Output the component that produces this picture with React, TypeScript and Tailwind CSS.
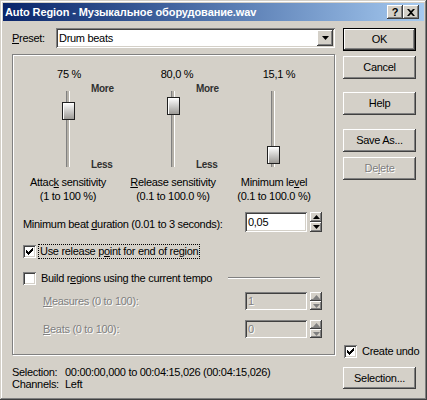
import React from "react";

const raised =
  "shadow-[inset_-1px_-1px_#404040,inset_1px_1px_#ffffff,inset_-2px_-2px_#808080,inset_2px_2px_#d4d0c8]";
const sunken =
  "shadow-[inset_1px_1px_#808080,inset_-1px_-1px_#ffffff,inset_2px_2px_#404040,inset_-2px_-2px_#d4d0c8]";
const grayText = "text-[#808080] [text-shadow:1px_1px_0_#ffffff]";

function Btn({ label, def, disabled, className = "h-[23px]" }: { label: React.ReactNode; def?: boolean; disabled?: boolean; className?: string }) {
  const inner = (
    <div className={`flex h-full w-full items-center justify-center bg-[#d4d0c8] ${raised} ${disabled ? grayText : "text-black"}`}>
      {label}
    </div>
  );
  return <div className={`w-[73px] ${def ? "border border-black" : ""} ${className}`}>{inner}</div>;
}

function Check({ checked }: { checked?: boolean }) {
  return (
    <div className={`relative h-[13px] w-[13px] shrink-0 bg-white ${sunken}`}>
      {checked && (
        <svg className="absolute left-0 top-0" width="13" height="13" viewBox="0 0 13 13">
          <path d="M3 5h1v1h1v1h1V6h1V5h1V4h1V3h1v3h-1v1h-1v1h-1v1h-1v1H5V9H4V8H3z" fill="#000" />
        </svg>
      )}
    </div>
  );
}

function Tri({ up, color }: { up?: boolean; color: string }) {
  return (
    <svg width="7" height="4" viewBox="0 0 7 4">
      <path d={up ? "M3.5 0L7 4H0z" : "M0 0h7L3.5 4z"} fill={color} />
    </svg>
  );
}

function Spin({ h, disabled }: { h: number; disabled?: boolean }) {
  const half = h / 2;
  const col = disabled ? "#808080" : "#000000";
  return (
    <div className="flex w-[12px] flex-col">
      <div style={{ height: half }} className={`flex items-center justify-center bg-[#d4d0c8] ${raised}`}>
        <Tri up color={col} />
      </div>
      <div style={{ height: half }} className={`flex items-center justify-center bg-[#d4d0c8] ${raised}`}>
        <Tri color={col} />
      </div>
    </div>
  );
}

function Slider({ thumbTop, moreLess }: { thumbTop: number; moreLess?: boolean }) {
  return (
    <div className="relative flex h-[82px] justify-center">
      <div className="mt-[3px] h-[76px] w-[4px] border-l border-r border-l-[#808080] border-r-white bg-[#b4b0a8]" />
      <div
        style={{ top: thumbTop }}
        className="absolute left-[calc(50%-6px)] h-[18px] w-[13px] border border-[#202020] bg-linear-to-b from-white to-[#9c9a96] shadow-[inset_1px_1px_#ffffff]"
      />
      {moreLess && (
        <>
          <span className="absolute left-[calc(50%+23px)] top-[-5px] text-[10px] font-bold leading-[12px] text-[#303030]">More</span>
          <span className="absolute left-[calc(50%+23px)] top-[71px] text-[10px] font-bold leading-[12px] text-[#303030]">Less</span>
        </>
      )}
    </div>
  );
}

export default function App() {
  return (
    <div
      className="flex h-[400px] w-[427px] flex-col bg-[#d4d0c8] p-[3px] text-[11px] leading-[13px] tracking-[-0.3px] text-black shadow-[inset_-1px_-1px_#404040,inset_1px_1px_#d4d0c8,inset_-2px_-2px_#808080,inset_2px_2px_#ffffff]"
      style={{ fontFamily: '"Liberation Sans", Arial, sans-serif' }}
    >
      {/* Title bar */}
      <div className="flex h-[18px] items-center justify-between bg-linear-to-r from-[#0a246a] to-[#a6caf0] pl-[2px] pr-[5px]">
        <span className="text-[11px] font-bold tracking-[-0.1px] text-white">Auto Region - Музыкальное оборудование.wav</span>
        <div className="flex">
          <div className={`flex h-[14px] w-[16px] items-center justify-center bg-[#d4d0c8] text-[11px] font-bold ${raised}`}>?</div>
          <div className={`flex h-[14px] w-[16px] items-center justify-center bg-[#d4d0c8] ${raised}`}>
            <svg width="8" height="7" viewBox="0 0 8 7">
              <path d="M0 0h2l2 2 2-2h2L5 3.5 8 7H6L4 5 2 7H0l3-3.5z" fill="#000" />
            </svg>
          </div>
        </div>
      </div>

      {/* Body */}
      <div className="flex pl-[9px] pt-[7px]">
        {/* Left column */}
        <div className="flex w-[323px] flex-col">
          <div className="flex h-[20px] items-center">
            <span className="w-[44px]">
              <u>P</u>reset:
            </span>
            <div className={`flex h-[20px] flex-1 items-center bg-white p-[2px] ${sunken}`}>
              <span className="flex-1 pl-[1px]">Drum beats</span>
              <div className={`flex h-[16px] w-[16px] items-center justify-center bg-[#d4d0c8] ${raised}`}>
                <Tri color="#000" />
              </div>
            </div>
          </div>

          <div className="mt-[6px] flex h-[301px] flex-col border border-[#808080] shadow-[inset_1px_1px_#ffffff,1px_1px_#ffffff]">
            {/* Sliders */}
            <div className="flex pl-[5px] pt-[13px]">
              <div className="flex w-[100px] flex-col items-center">
                <span className="pl-[2px]">75 %</span>
                <div className="mt-[7px] w-full">
                  <Slider thumbTop={14} moreLess />
                </div>
                <div className="mt-[5px] text-center leading-[14px]">
                  Attac<u>k</u> sensitivity
                  <br />
                  (1 to 100 %)
                </div>
              </div>
              <div className="ml-[5px] flex w-[100px] flex-col items-center">
                <span className="pl-[8px]">80,0 %</span>
                <div className="mt-[7px] w-full">
                  <Slider thumbTop={9} moreLess />
                </div>
                <div className="mt-[5px] text-center leading-[14px]">
                  <u>R</u>elease sensitivity
                  <br />
                  (0.1 to 100.0 %)
                </div>
              </div>
              <div className="flex w-[100px] flex-col items-center">
                <span className="pl-[12px]">15,1 %</span>
                <div className="mt-[7px] w-full">
                  <Slider thumbTop={58} />
                </div>
                <div className="mt-[5px] pl-[2px] text-center leading-[14px]">
                  Minimum le<u>v</u>el
                  <br />
                  (0.1 to 100.0 %)
                </div>
              </div>
            </div>

            {/* Minimum beat duration */}
            <div className="mt-[9px] flex h-[20px] items-center pl-[10px]">
              <span className="w-[222px] pt-[4px]">
                Minimum beat <u>d</u>uration (0.01 to 3 seconds):
              </span>
              <div className={`flex h-[20px] w-[62px] items-center bg-white pl-[3px] ${sunken}`}>0,05</div>
              <div className="ml-[3px]">
                <Spin h={20} />
              </div>
            </div>

            {/* Use release point */}
            <div className="mt-[11px] flex h-[16px] items-center pl-[10px]">
              <Check checked />
              <span className="ml-[2px] border border-dotted border-black px-[1px] leading-[13px]">
                Use release p<u>o</u>int for end of region
              </span>
            </div>

            {/* Build regions */}
            <div className="mt-[11px] flex h-[16px] items-center pl-[10px]">
              <Check />
              <span className="ml-[5px]">
                Build r<u>e</u>gions using the current tempo
              </span>
              <div className="ml-auto mr-[14px] w-[92px] border-t border-b border-t-[#808080] border-b-white" />
            </div>

            {/* Measures */}
            <div className="mt-[6px] flex h-[18px] items-center pl-[30px]">
              <span className={`w-[202px] ${grayText}`}>
                <u>M</u>easures (0 to 100):
              </span>
              <div className={`flex h-[18px] w-[62px] items-center bg-[#d4d0c8] pl-[3px] ${sunken} ${grayText}`}>1</div>
              <div className="ml-[3px]">
                <Spin h={18} disabled />
              </div>
            </div>

            {/* Beats */}
            <div className="mt-[10px] flex h-[18px] items-center pl-[30px]">
              <span className={`w-[202px] ${grayText}`}>
                <u>B</u>eats (0 to 100):
              </span>
              <div className={`flex h-[18px] w-[62px] items-center bg-[#d4d0c8] pl-[3px] ${sunken} ${grayText}`}>0</div>
              <div className="ml-[3px]">
                <Spin h={18} disabled />
              </div>
            </div>
          </div>

          {/* Selection info */}
          <div className="mt-[11px] grid grid-cols-[53px_1fr] leading-[12px]">
            <span>Selection:</span>
            <span>00:00:00,000 to 00:04:15,026 (00:04:15,026)</span>
            <span>Channels:</span>
            <span>Left</span>
          </div>
        </div>

        {/* Right column */}
        <div className="ml-[8px] flex w-[73px] flex-col">
          <Btn label="OK" def />
          <Btn label="Cancel" className="mt-[5px] h-[23px]" />
          <Btn label="Help" className="mt-[13px] h-[23px]" />
          <Btn label="Save As..." className="mt-[14px] h-[23px]" />
          <Btn label={<span>De<u>l</u>ete</span>} disabled className="mt-[5px] h-[23px]" />
          <div className="mt-[164px] flex h-[15px] items-center whitespace-nowrap pl-[1px]">
            <Check checked />
            <span className="ml-[5px]">Create undo</span>
          </div>
          <Btn label="Selection..." className="mt-[8px] h-[22px]" />
        </div>
      </div>
    </div>
  );
}
